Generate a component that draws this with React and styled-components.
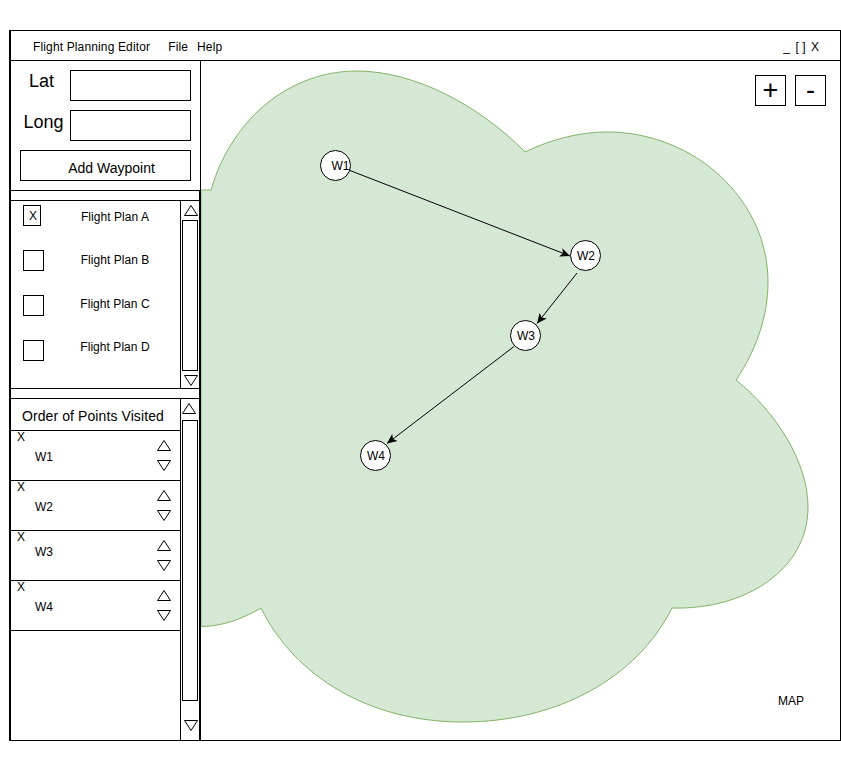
import React from 'react'
import styled, { createGlobalStyle } from 'styled-components'

const GlobalStyle = createGlobalStyle`
  * {
    box-sizing: border-box;
  }

  body {
    margin: 0;
    background: #fff;
    color: #000;
    font-family: "Liberation Sans", Arial, sans-serif;
    font-size: 12px;
  }
`

const Frame = styled.div`
  width: 832px;
  height: 711px;
  margin: 30px 0 0 9px;
  display: flex;
  flex-direction: column;
  border: 1px solid #000;
  border-left-width: 2px;
`

const TitleBar = styled.header`
  height: 30px;
  flex: none;
  display: flex;
  align-items: center;
  padding: 2px 21px 0 22px;
  border-bottom: 1px solid #000;
`

const MenuItem = styled.span`
  margin-left: ${props => props.$left || 0}px;
  letter-spacing: 0.14px;
`

const WindowControls = styled.div`
  margin-left: auto;
  display: flex;
  gap: 5.5px;
`

const Body = styled.div`
  flex: 1;
  display: flex;
  min-height: 0;
`

const Sidebar = styled.aside`
  width: 190px;
  flex: none;
  display: flex;
  flex-direction: column;
  border-right: 1px solid #000;
`

const WaypointForm = styled.form`
  height: 130px;
  flex: none;
  display: flex;
  flex-direction: column;
  gap: 9px;
  padding: 9px 9px 0 9px;
  border-bottom: 1px solid #000;
`

const Field = styled.div`
  display: flex;
  align-items: flex-start;
`

const FieldLabel = styled.label`
  width: 59px;
  flex: none;
  margin: ${props => props.$top}px 0 -${props => props.$top}px -9px;
  font-size: 18px;
  line-height: 22px;
  text-align: center;
  white-space: nowrap;
  padding-left: ${props => props.$shift}px;
`

const FieldInput = styled.div`
  width: 121px;
  height: 31px;
  border: 1px solid #000;
  background: #fff;
`

const AddButton = styled.div`
  width: 171px;
  height: 31px;
  display: flex;
  align-items: center;
  justify-content: center;
  padding: 4px 0 0 12px;
  border: 1px solid #000;
  font-size: 14px;
`

const Spacer = styled.div`
  height: 10px;
  flex: none;
  border-bottom: 1px solid #000;
  border-right: 1px solid #000;
`

const ListPanel = styled.section`
  display: flex;
  flex: ${props => (props.$grow ? 1 : 'none')};
  height: ${props => (props.$grow ? 'auto' : '188px')};
  border-right: 1px solid #000;
  border-bottom: ${props => (props.$grow ? 'none' : '1px solid #000')};
`

const ListBody = styled.div`
  width: 170px;
  flex: none;
  border-right: 1px solid #000;
`

const ScrollColumn = styled.div`
  flex: 1;
  display: flex;
  flex-direction: column;
  padding: 4px 0 0 1px;
`

const ScrollThumb = styled.div`
  width: 16px;
  height: ${props => props.$height}px;
  margin: ${props => props.$above}px 0 ${props => props.$below}px 0;
  border: 1px solid #000;
`

const ArrowSvg = styled.svg`
  display: block;
  flex: none;
  margin-left: ${props => props.$left || 0}px;
`

const PlanRow = styled.div`
  height: 45px;
  display: flex;
  align-items: flex-start;
  padding: 4px 0 0 12px;
`

const CheckSlot = styled.div`
  width: 21px;
  flex: none;
`

const CheckBox = styled.div`
  width: ${props => props.$width}px;
  height: 21px;
  display: flex;
  align-items: center;
  justify-content: center;
  padding-left: ${props => (props.$width < 21 ? 2 : 0)}px;
  border: 1px solid #000;
`

const PlanLabel = styled.span`
  width: 100px;
  margin: ${props => props.$top}px 0 0 21px;
  line-height: 16px;
  text-align: center;
  letter-spacing: 0.05px;
`

const ListHeader = styled.div`
  height: 32px;
  display: flex;
  align-items: center;
  padding: 2px 0 0 11px;
  font-size: 14px;
  letter-spacing: 0.09px;
  border-bottom: 1px solid #000;
`

const PointRow = styled.div`
  height: 50px;
  display: flex;
  justify-content: space-between;
  padding: 0 9px 0 6px;
  border-bottom: 1px solid #000;
`

const PointText = styled.div`
  display: flex;
  flex-direction: column;
`

const RemoveMark = styled.span`
  line-height: 13px;
`

const PointName = styled.span`
  margin: ${props => props.$top}px 0 0 18px;
  line-height: 14px;
`

const PointArrows = styled.div`
  display: flex;
  flex-direction: column;
  gap: 9px;
  padding-top: 9px;
`

const MapArea = styled.main`
  flex: 1;
  position: relative;
  overflow: hidden;
`

const MapDrawing = styled.svg`
  position: absolute;
  top: 0;
  left: 0;
`

const ZoomControls = styled.div`
  position: absolute;
  top: 14px;
  right: 14px;
  display: flex;
  gap: 9px;
`

const ZoomButton = styled.div`
  width: 31px;
  height: 31px;
  display: flex;
  align-items: center;
  justify-content: center;
  border: 1px solid #000;
  background: #fff;
  font-size: 27px;
`

const WaypointNode = styled.div`
  position: absolute;
  left: ${props => props.$x}px;
  top: ${props => props.$y}px;
  width: 31px;
  height: 31px;
  display: flex;
  align-items: center;
  justify-content: center;
  padding-left: ${props => props.$nudge}px;
  border: 1px solid #000;
  border-radius: 50%;
  background: #fff;
`

const MapCaption = styled.span`
  position: absolute;
  right: 36px;
  bottom: 32px;
`

const Arrow = ({ up, left }) => (
  <ArrowSvg width="14" height="11" viewBox="0 0 14 11" $left={left}>
    <polygon
      points={up ? '7,0.5 13.5,10.5 0.5,10.5' : '7,10.5 13.5,0.5 0.5,0.5'}
      fill="#fff"
      stroke="#000"
    />
  </ArrowSvg>
)

const plans = [
  { name: 'Flight Plan A', checked: true, top: 4 },
  { name: 'Flight Plan B', top: 2 },
  { name: 'Flight Plan C', top: 1 },
  { name: 'Flight Plan D', top: -1 },
]

const points = [
  { name: 'W1', top: 6 },
  { name: 'W2', top: 6 },
  { name: 'W3', top: 1 },
  { name: 'W4', top: 6 },
]

const nodes = [
  { name: 'W1', x: 119, y: 89, nudge: 10 },
  { name: 'W2', x: 369, y: 179, nudge: 1 },
  { name: 'W3', x: 309, y: 259, nudge: 1 },
  { name: 'W4', x: 159, y: 379, nudge: 1 },
]

const edges = [
  [350, 170.5, 570, 256],
  [577, 273, 537, 323.5],
  [514, 346.5, 387, 443.5],
]

const cloud = `M201 190 L211 190 C232 118 290 71 357 71 C415 71 480 106 525 152
  C550 140 578 132 607 132 C695 132 768 200 768 282 C768 318 755 352 736 380
  C776 412 808 462 808 507 C808 570 745 610 672 608 C637 678 557 722 463 722
  C370 722 295 677 261 608 C242 619 222 626.5 201 626.5 Z`

const App = () => {
  return (
    <>
      <GlobalStyle />
      <Frame>
        <TitleBar>
          <MenuItem>Flight Planning Editor</MenuItem>
          <MenuItem $left={18}>File</MenuItem>
          <MenuItem $left={9}>Help</MenuItem>
          <WindowControls>
            <span>_</span>
            <span>[ ]</span>
            <span>X</span>
          </WindowControls>
        </TitleBar>
        <Body>
          <Sidebar>
            <WaypointForm>
              <Field>
                <FieldLabel $shift={2} $top={0}>Lat</FieldLabel>
                <FieldInput />
              </Field>
              <Field>
                <FieldLabel $shift={6} $top={1}>Long</FieldLabel>
                <FieldInput />
              </Field>
              <AddButton>Add Waypoint</AddButton>
            </WaypointForm>
            <Spacer />
            <ListPanel>
              <ListBody>
                {plans.map(plan => (
                  <PlanRow key={plan.name}>
                    <CheckSlot>
                      <CheckBox $width={plan.checked ? 18 : 21}>{plan.checked && 'X'}</CheckBox>
                    </CheckSlot>
                    <PlanLabel $top={plan.top}>{plan.name}</PlanLabel>
                  </PlanRow>
                ))}
              </ListBody>
              <ScrollColumn>
                <Arrow up left={2} />
                <ScrollThumb $height={151} $above={4} $below={4} />
                <Arrow left={2} />
              </ScrollColumn>
            </ListPanel>
            <Spacer />
            <ListPanel $grow>
              <ListBody>
                <ListHeader>Order of Points Visited</ListHeader>
                {points.map(point => (
                  <PointRow key={point.name}>
                    <PointText>
                      <RemoveMark>X</RemoveMark>
                      <PointName $top={point.top}>{point.name}</PointName>
                    </PointText>
                    <PointArrows>
                      <Arrow up />
                      <Arrow />
                    </PointArrows>
                  </PointRow>
                ))}
              </ListBody>
              <ScrollColumn>
                <Arrow up />
                <ScrollThumb $height={281} $above={6} $below={19} />
                <Arrow left={2} />
              </ScrollColumn>
            </ListPanel>
          </Sidebar>
          <MapArea>
            <MapDrawing width="639" height="679" viewBox="201 61 639 679">
              <defs>
                <marker id="head" markerWidth="11" markerHeight="10" refX="10" refY="5" orient="auto" markerUnits="userSpaceOnUse">
                  <path d="M0 0.5 L10 5 L0 9.5 L2.5 5 Z" fill="#000" />
                </marker>
              </defs>
              <path d={cloud} fill="#d5e8d4" stroke="#82b366" />
              {edges.map(([x1, y1, x2, y2]) => (
                <line key={x1} x1={x1} y1={y1} x2={x2} y2={y2} stroke="#000" markerEnd="url(#head)" />
              ))}
            </MapDrawing>
            {nodes.map(node => (
              <WaypointNode key={node.name} $x={node.x} $y={node.y} $nudge={node.nudge}>
                {node.name}
              </WaypointNode>
            ))}
            <ZoomControls>
              <ZoomButton>+</ZoomButton>
              <ZoomButton>-</ZoomButton>
            </ZoomControls>
            <MapCaption>MAP</MapCaption>
          </MapArea>
        </Body>
      </Frame>
    </>
  )
}

export default App
